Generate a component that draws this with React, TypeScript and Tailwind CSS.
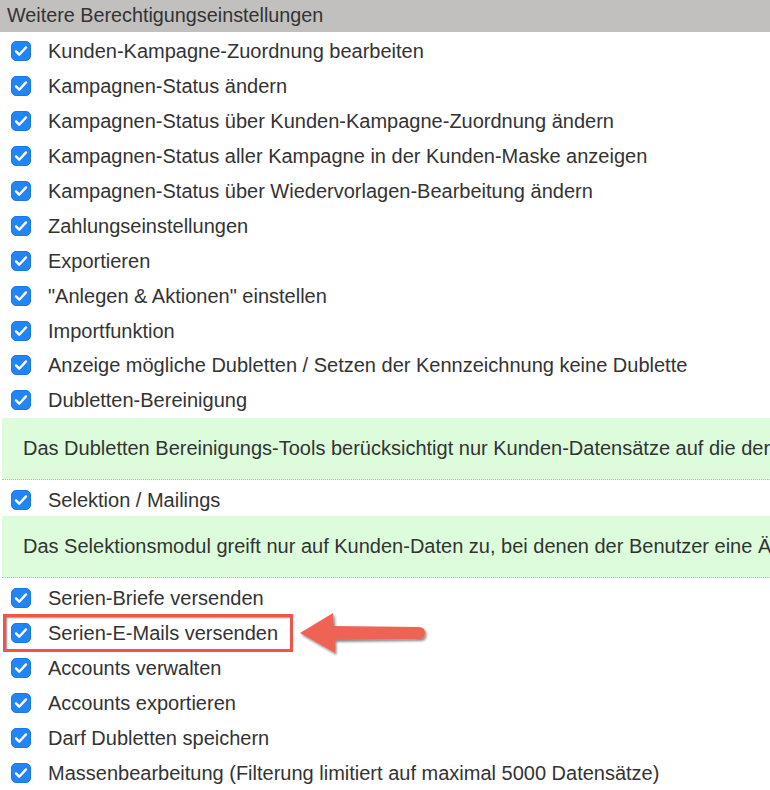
import { ReactNode } from "react";

const groupA = [
  "Kunden-Kampagne-Zuordnung bearbeiten",
  "Kampagnen-Status ändern",
  "Kampagnen-Status über Kunden-Kampagne-Zuordnung ändern",
  "Kampagnen-Status aller Kampagne in der Kunden-Maske anzeigen",
  "Kampagnen-Status über Wiedervorlagen-Bearbeitung ändern",
  "Zahlungseinstellungen",
  "Exportieren",
  "\"Anlegen & Aktionen\" einstellen",
  "Importfunktion",
  "Anzeige mögliche Dubletten / Setzen der Kennzeichnung keine Dublette",
  "Dubletten-Bereinigung",
];

const groupB = [
  "Accounts verwalten",
  "Accounts exportieren",
  "Darf Dubletten speichern",
  "Massenbearbeitung (Filterung limitiert auf maximal 5000 Datensätze)",
];

function Check() {
  return (
    <svg width="20" height="20" viewBox="0 0 20 20" className="shrink-0">
      <rect x="0.5" y="0.5" width="19" height="19" rx="4.5" fill="#2184f7" stroke="#1b78e6" />
      <path d="M5 10.4l3.2 3.3L15 6.4" fill="none" stroke="#fff" strokeWidth="2.4" strokeLinecap="round" strokeLinejoin="round" />
    </svg>
  );
}

function Row({ label, children, className = "" }: { label: string; children?: ReactNode; className?: string }) {
  return (
    <div className={`relative flex h-[34.9px] items-center pl-[11px] ${className}`}>
      <Check />
      <span className="ml-[17px] whitespace-nowrap">{label}</span>
      {children}
    </div>
  );
}

function Note({ text }: { text: string }) {
  return (
    <div className="ml-[2px] flex h-[62px] items-center overflow-hidden border-b border-dotted border-[#b5bdb5] bg-[#dcfcdc] pl-[21px]">
      <span className="shrink-0 whitespace-nowrap">{text}</span>
    </div>
  );
}

export default function App() {
  return (
    <div className="h-[790px] w-[770px] overflow-hidden bg-white font-['Liberation_Sans',Arial,sans-serif] text-[20px] text-[#333]">
      <div className="flex h-8 items-center bg-[#c2bfbf] pl-[7px] text-[19.8px]">
        Weitere Berechtigungseinstellungen
      </div>

      <div className="pt-[2px]">
        {groupA.map((l) => (
          <Row key={l} label={l} />
        ))}
      </div>

      <Note text="Das Dubletten Bereinigungs-Tools berücksichtigt nur Kunden-Datensätze auf die der Benutzer Zugriff hat." />
      <div className="flex h-[36px] items-center pl-[11px] pt-[4px]">
        <Check />
        <span className="ml-[17px]">Selektion / Mailings</span>
      </div>
      <Note text="Das Selektionsmodul greift nur auf Kunden-Daten zu, bei denen der Benutzer eine Änderungsberechtigung hat." />

      <div className="pt-[3px]">
        <Row label="Serien-Briefe versenden" />
        <Row label="Serien-E-Mails versenden">
          {/* highlight frame + pointer arrow */}
          <div className="pointer-events-none absolute left-[3px] top-[-2px] h-[38px] w-[290px] border-[3px] border-[#ef5549] shadow-[inset_1px_1px_2px_rgba(0,0,0,0.45)]" />
          <svg className="pointer-events-none absolute left-[298px] top-[-5px]" width="136" height="50" viewBox="0 0 136 50">
            <defs>
              <filter id="arrowShadow" x="-10%" y="-20%" width="130%" height="150%">
                <feDropShadow dx="1.5" dy="2" stdDeviation="1.2" floodColor="#000" floodOpacity="0.45" />
              </filter>
            </defs>
            <path
              d="M2 22 L35 2 L36 15 L121 16 Q127 16 127 22 Q127 28 121 28 L37 29 L37 42 Z"
              fill="#ee6453"
              filter="url(#arrowShadow)"
            />
          </svg>
        </Row>
        {groupB.map((l) => (
          <Row key={l} label={l} />
        ))}
      </div>
    </div>
  );
}
